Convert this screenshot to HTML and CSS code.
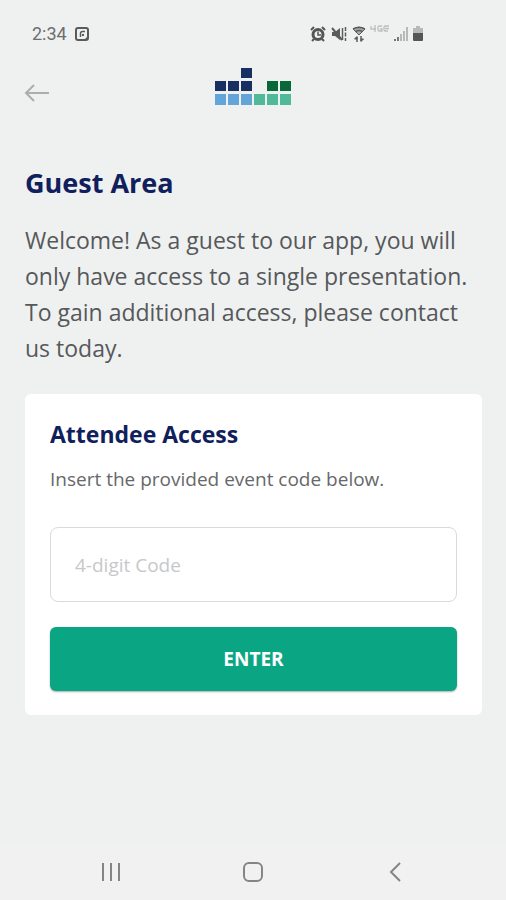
FILE: index.html
```html
<!DOCTYPE html>
<html lang="en">
<head>
<meta charset="utf-8">
<meta name="viewport" content="width=device-width, initial-scale=1">
<title>Guest Area</title>
<link rel="stylesheet" href="styles.css">
</head>
<body>
<div class="status">
  <div class="status-left">
    <span class="time">2:34</span>
    <svg width="14" height="14" viewBox="0 0 14 14" fill="none" stroke="#5a5a5a" stroke-width="2"><rect x="1" y="1" width="12" height="12" rx="2"/><path d="M5.500 10V6.500a2 2 0 0 1 2-2H10" stroke-width="1.500"/><path d="M7 7h2v2H7z" fill="#5a5a5a" stroke="none"/><path d="M9 13l4-4v4z" fill="#5a5a5a" stroke="none"/></svg>
  </div>
  <div class="status-right">
    <svg width="16" height="16" viewBox="0 0 16 16" fill="none" stroke="#555"><circle cx="8" cy="8.500" r="5" stroke-width="3"/><path d="M1 4l3-3M15 4l-3-3M4 13l-2 2M12 13l2 2" stroke-width="2"/><path d="M8 5.500v3.500h3" stroke-width="1.500"/></svg>
    <svg width="16" height="16" viewBox="0 0 16 16" fill="none" stroke="#5c5c5c"><path d="M1 6h3l5-4v12l-5-4H1z" fill="#5c5c5c" stroke="none"/><path d="M1 2l10 12" stroke-width="2"/><path d="M11.500 2v12M14.500 1v4M14.500 6.500v4M14.500 12v3" stroke-width="1.500"/></svg>
    <svg width="14" height="16" viewBox="0 0 14 16" fill="none" stroke="#5c5c5c"><path d="M1 3q6-4 12 0L7 9z" fill="#aaa" stroke-width="1"/><path d="M1 3q6-3 12 0M3.500 5.500q3.500-2 7 0" stroke-width="1.500"/><path d="M5 16V11M9 10v5" stroke-width="1.500"/><path d="M2.500 13L5 10.500V13zM11.500 13L9 15.500V13z" fill="#5c5c5c"/></svg>
    <svg class="network" width="20" height="10" viewBox="0 0 20 10" fill="none" stroke="#bdbdbd" stroke-width="1.300"><path d="M1 1v3h5M5 0v7M12 1H9L8 2v3l1 1h3V4h-2M19 1h-4l-1 1v3l1 1h3M15 3.500h4"/></svg>
    <svg width="14" height="16" viewBox="0 0 14 16"><path d="M0 15v-2h2v2zM3 15v-4h2v4z" fill="#777"/><path d="M6 15V8h2v7zM9 15V5h2v10zM12 15V1h2v14z" fill="#b8b8b8"/></svg>
    <svg width="12" height="16" viewBox="0 0 12 16"><path d="M4 0h4v2h3v5H1V2h3z" fill="#b8b8b8"/><path d="M1 7h10v7q0 1-1 1H2q-1 0-1-1z" fill="#555"/></svg>
  </div>
</div>
<header class="header">
  <a class="back" href="#" aria-label="Back"><svg width="26" height="20" viewBox="0 0 26 20" fill="none" stroke="#acaeae" stroke-width="2"><path d="M25 10H2M10 2L2 10l8 8"/></svg></a>
  <svg class="logo" width="77" height="37" viewBox="0 0 77 37" role="img" aria-label="Logo">
    <g fill="#182f62"><path d="M0 13h11v10H0zM13 13h11v10H13zM26 13h11v10H26zM26 0h11v10H26z"/></g>
    <g fill="#63a5d8"><path d="M0 26h11v11H0zM13 26h11v11H13zM26 26h11v11H26z"/></g>
    <g fill="#08683a"><path d="M52 13h11v10H52zM65 13h11v10H65z"/></g>
    <g fill="#50b998"><path d="M39 26h11v11H39zM52 26h11v11H52zM65 26h11v11H65z"/></g>
  </svg>
</header>
<main class="content">
  <h1>Guest Area</h1>
  <p class="intro">Welcome! As a guest to our app, you will only have access to a single presentation. To gain additional access, please contact us today.</p>
  <form class="card">
    <h2>Attendee Access</h2>
    <label for="code">Insert the provided event code below.</label>
    <input id="code" type="text" inputmode="numeric" placeholder="4-digit Code">
    <button type="button">ENTER</button>
  </form>
</main>
<nav class="navbar">
  <button type="button" aria-label="Recent apps"><svg width="20" height="20" viewBox="0 0 20 20" stroke="#858585" stroke-width="2"><path d="M2 1v18M10 1v18M18 1v18"/></svg></button>
  <button type="button" aria-label="Home"><svg width="20" height="20" viewBox="0 0 20 20" fill="none" stroke="#858585" stroke-width="2"><rect x="1" y="1" width="18" height="18" rx="5"/></svg></button>
  <button type="button" aria-label="Back"><svg width="20" height="20" viewBox="0 0 20 20" fill="none" stroke="#858585" stroke-width="2"><path d="M15 1L6 10l9 9"/></svg></button>
</nav>
</body>
</html>
```
FILE: styles.css
```css
* { box-sizing: border-box; }

body {
  margin: 0;
  min-height: 100vh;
  display: flex;
  flex-direction: column;
  background: #eff1f1;
  color: #56585a;
  font-family: "Open Sans", sans-serif;
}

svg { display: block; }

.status {
  display: flex;
  justify-content: space-between;
  align-items: center;
  height: 68px;
  padding: 0 82px 0 32px;
}

.status-left,
.status-right {
  display: flex;
  align-items: center;
}

.status-left { gap: 8px; }
.status-right { gap: 5px; }
.status-right svg:nth-child(n + 4) { margin-left: -1px; }

.time {
  font: 18px/24px Roboto, sans-serif;
  color: #6c6e6e;
}

.network { margin-bottom: 8px; }

.header {
  display: grid;
  grid-template-columns: 1fr auto 1fr;
  align-items: center;
  padding: 0 24px;
}

.back { margin-top: 12px; }

.content {
  flex: 1;
  padding: 60px 24px 24px 25px;
}

h1,
h2 {
  margin: 0;
  color: #10205c;
  font-weight: 700;
}

h1 {
  font-size: 27px;
  line-height: 36px;
}

.intro {
  margin: 21px 0 28px;
  font-size: 23px;
  line-height: 36px;
}

.card {
  display: flex;
  flex-direction: column;
  padding: 24px 25px;
  border-radius: 6px;
  background: #fff;
}

h2 {
  font-size: 23px;
  line-height: 32px;
}

.card label {
  margin: 17px 0 36px;
  font-size: 19px;
  line-height: 24px;
  color: #66686a;
}

.card input {
  width: 100%;
  height: 75px;
  padding: 0 24px;
  border: 1px solid #d8dadb;
  border-radius: 8px;
  background: #fff;
  color: #56585a;
  font: 19px/24px "Open Sans", sans-serif;
}

.card input::placeholder {
  color: #c6c8ca;
  opacity: 1;
}

.card button {
  height: 64px;
  margin-top: 25px;
  border: 0;
  border-radius: 6px;
  background: #0aa684;
  box-shadow: 0 1px 2px #00000055;
  color: #fff;
  font: 700 19px/24px "Open Sans", sans-serif;
}

.navbar {
  display: flex;
  justify-content: space-around;
  align-items: center;
  height: 56px;
  padding: 0 40px;
  background: #f1f1f1;
}

.navbar button {
  padding: 0;
  border: 0;
  background: none;
}
```
